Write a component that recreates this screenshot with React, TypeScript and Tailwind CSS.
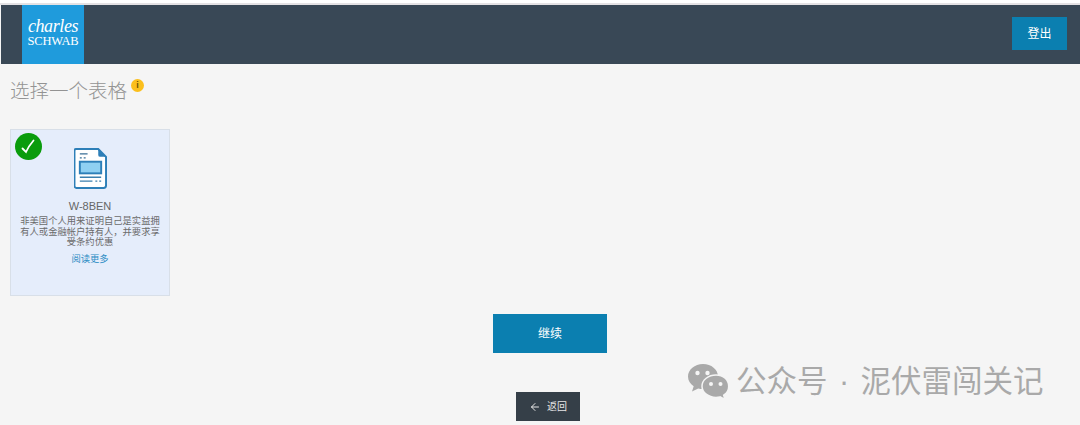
import React from 'react';
import { ArrowLeft } from 'lucide-react';

const cjk = { fontFamily: '"Liberation Sans", "Noto Sans CJK SC", sans-serif' };

const FormIcon = () => (
    <svg width="33" height="41" viewBox="0 0 34 42" fill="none">
        <path d="M2.500 1h22.500l8 8v29.500a2.500 2.500 0 0 1-2.500 2.500h-28a2 2 0 0 1-2-2.500V2.500a1.500 1.500 0 0 1 1.500-1.500z" fill="#ffffff" stroke="#2d7fb8" strokeWidth="2" />
        <path d="M25 1l8 8h-6a2 2 0 0 1-2-2z" fill="#2d7fb8" />
        <path d="M6 6h8M6 10h2M10 10h2" stroke="#3a6f96" strokeWidth="1.300" />
        <rect x="6" y="14" width="22" height="12" fill="#8fd0f2" stroke="#2d7fb8" strokeWidth="2" />
        <path d="M6 30h22M6 34h13M22 34h2M26 34h2" stroke="#3a7fae" strokeWidth="1.500" />
    </svg>
);

const CheckMark = () => (
    <svg width="27" height="27" viewBox="0 0 27 27" fill="none">
        <path d="M7.500 15.500l3.500 3.500c2-4.500 4.500-8 7.500-11.500" stroke="#ffffff" strokeWidth="1.800" strokeLinecap="round" />
    </svg>
);

const WeChatIcon = () => (
    <svg width="44" height="36" viewBox="0 0 44 36" fill="#a9a9a9">
        <path d="M16 1C7.700 1 1 6.600 1 13.500c0 4 2.200 7.500 5.700 9.800L5 28.500l6.200-3c1.500.4 3.100.6 4.800.6 8.300 0 15-5.600 15-12.600S24.300 1 16 1z" />
        <path d="M29 12c-7.600 0-14 5-14 11.200s6.400 11.200 14 11.200c1.400 0 2.800-.2 4-.5l5 2.600-1.300-4.300c3-2 5-5.200 5-8.800C41.700 17 36.600 12 29 12z" stroke="#f5f5f5" strokeWidth="1.500" />
        <circle cx="10.500" cy="10" r="2.200" fill="#f5f5f5" />
        <circle cx="20.500" cy="10" r="2.200" fill="#f5f5f5" />
        <circle cx="24" cy="21" r="2" fill="#f5f5f5" />
        <circle cx="33.500" cy="21" r="2" fill="#f5f5f5" />
    </svg>
);

export default function App() {
    return (
        <div className="relative h-[425px] w-[1080px] overflow-hidden bg-[#f5f5f5]" style={cjk}>
            <div className="h-[3px] bg-white" />
            <div className="h-[2px] bg-[#e4e2e4]" />
            <header className="ml-px flex h-[59px] items-start justify-between bg-[#394856] pl-[21px] pr-[13px]">
                <div className="flex h-[59px] w-[62px] flex-col items-center bg-[#1f9bdc] pt-[12px] text-white" style={{ fontFamily: '"Liberation Serif", serif' }}>
                    <span className="text-[18px] leading-[18px] italic tracking-[-0.4px]">charles</span>
                    <span className="text-[12.500px] leading-[13px] tracking-[-0.2px]">SCHWAB</span>
                </div>
                <button className="mt-3 h-[33px] w-[55px] bg-[#0b7fb0] text-xs text-white">登出</button>
            </header>

            <main className="px-2.5">
                <div className="flex items-start pt-[15px]">
                    <h1 className="text-[19.500px] leading-[25px] font-extralight text-[#939393]">选择一个表格</h1>
                    <span className="ml-1 flex h-[13px] w-[13px] items-center justify-center rounded-full bg-[#fbbf1c] text-[9px] leading-none font-bold text-[#6b5200]">i</span>
                </div>

                <div className="relative mt-[25px] flex h-[167px] w-[160px] flex-col items-center border border-[#d8dfe8] bg-[#e5edfb] px-1.5 pt-[18px] text-center">
                    <span className="absolute top-[3px] left-1 h-[27px] w-[27px] rounded-full bg-[#0a9c0c]">
                        <CheckMark />
                    </span>
                    <FormIcon />
                    <div className="mt-[10px] text-[11px] leading-[14px] text-[#666]">W-8BEN</div>
                    <p className="mt-[3px] text-[9.300px] leading-[10.700px] text-[#6b6b6b]">非美国个人用来证明自己是实益拥有人或金融帐户持有人，并要求享受条约优惠</p>
                    <a className="mt-[5px] text-[9.300px] leading-[12px] text-[#2b8cc4]">阅读更多</a>
                </div>
            </main>

            <div className="mt-[18px] ml-5 flex flex-col items-center">
                <button className="h-[39px] w-[114px] bg-[#0b7fb0] text-xs text-white">继续</button>
                <button className="mt-[39px] mr-1 flex h-[29px] w-[64px] items-center justify-center gap-[6px] bg-[#353f48] text-[10px] text-[#e6e6e6]">
                    <ArrowLeft size={12} />
                    返回
                </button>
            </div>

            <div className="absolute top-[363px] left-[687px] flex items-center gap-[5px] text-[30.500px] leading-[36px] text-[#a9a9a9]">
                <WeChatIcon />
                <span className="whitespace-nowrap [word-spacing:3px]">公众号 · 泥伏雷闯关记</span>
            </div>
        </div>
    );
}
